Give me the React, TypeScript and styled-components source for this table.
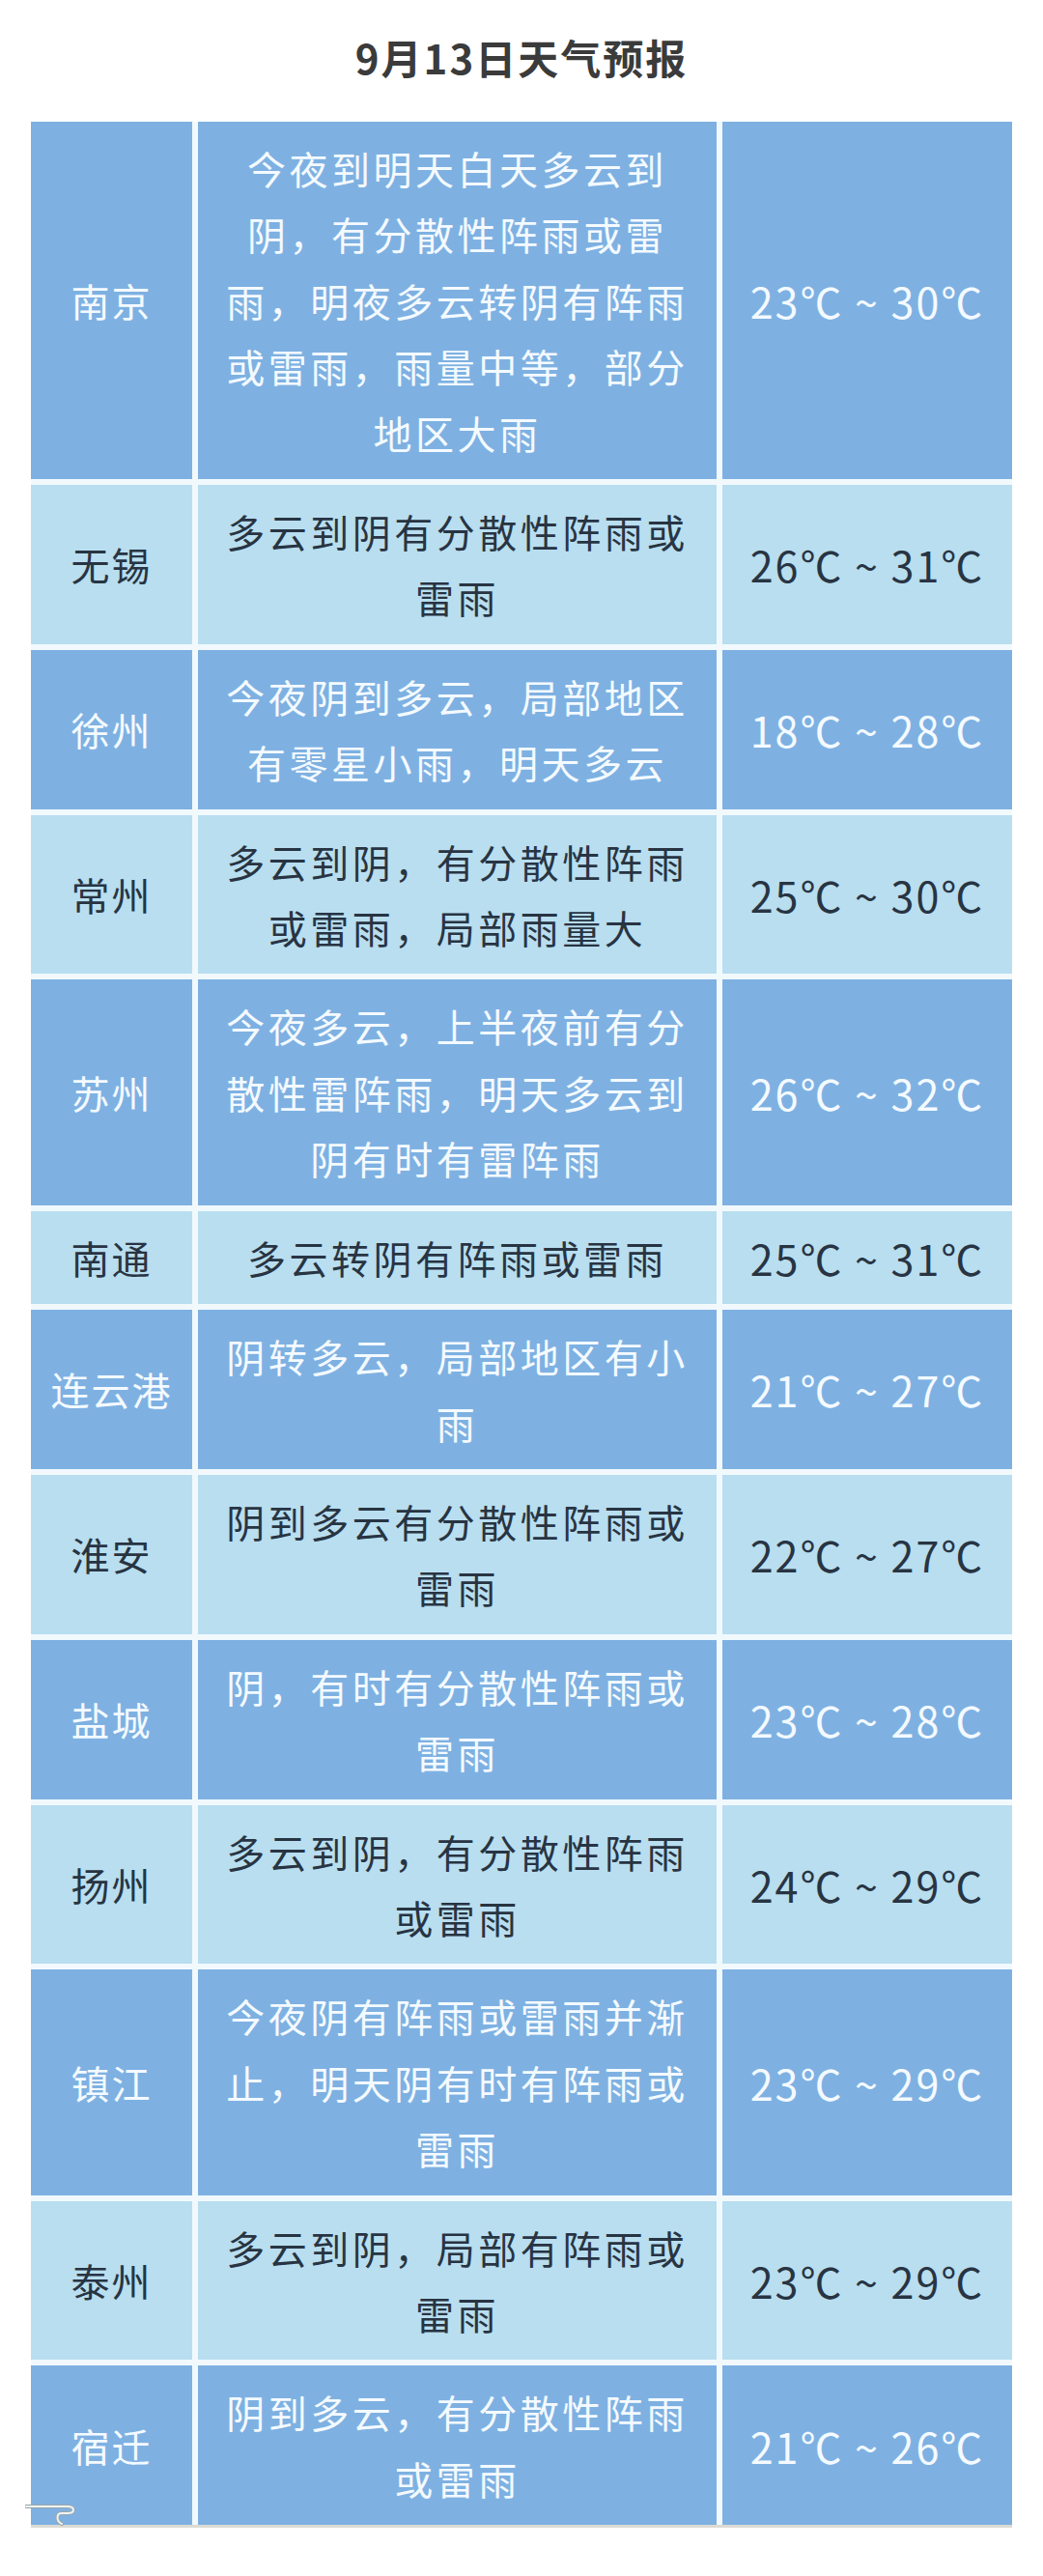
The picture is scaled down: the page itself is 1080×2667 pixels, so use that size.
import React, { FC } from "react";
import styled, { createGlobalStyle } from "styled-components";

type Tone = "dark" | "light";

interface RowData {
  city: string;
  tone: Tone;
  lines: string[];
  temp: string;
}

const rows: RowData[] = [
  {
    city: "南京",
    tone: "dark",
    lines: [
      "今夜到明天白天多云到",
      "阴，有分散性阵雨或雷",
      "雨，明夜多云转阴有阵雨",
      "或雷雨，雨量中等，部分",
      "地区大雨",
    ],
    temp: "23℃ ~ 30℃",
  },
  { city: "无锡", tone: "light", lines: ["多云到阴有分散性阵雨或", "雷雨"], temp: "26℃ ~ 31℃" },
  {
    city: "徐州",
    tone: "dark",
    lines: ["今夜阴到多云，局部地区", "有零星小雨，明天多云"],
    temp: "18℃ ~ 28℃",
  },
  {
    city: "常州",
    tone: "light",
    lines: ["多云到阴，有分散性阵雨", "或雷雨，局部雨量大"],
    temp: "25℃ ~ 30℃",
  },
  {
    city: "苏州",
    tone: "dark",
    lines: ["今夜多云，上半夜前有分", "散性雷阵雨，明天多云到", "阴有时有雷阵雨"],
    temp: "26℃ ~ 32℃",
  },
  { city: "南通", tone: "light", lines: ["多云转阴有阵雨或雷雨"], temp: "25℃ ~ 31℃" },
  { city: "连云港", tone: "dark", lines: ["阴转多云，局部地区有小", "雨"], temp: "21℃ ~ 27℃" },
  { city: "淮安", tone: "light", lines: ["阴到多云有分散性阵雨或", "雷雨"], temp: "22℃ ~ 27℃" },
  { city: "盐城", tone: "dark", lines: ["阴，有时有分散性阵雨或", "雷雨"], temp: "23℃ ~ 28℃" },
  { city: "扬州", tone: "light", lines: ["多云到阴，有分散性阵雨", "或雷雨"], temp: "24℃ ~ 29℃" },
  {
    city: "镇江",
    tone: "dark",
    lines: ["今夜阴有阵雨或雷雨并渐", "止，明天阴有时有阵雨或", "雷雨"],
    temp: "23℃ ~ 29℃",
  },
  { city: "泰州", tone: "light", lines: ["多云到阴，局部有阵雨或", "雷雨"], temp: "23℃ ~ 29℃" },
  { city: "宿迁", tone: "dark", lines: ["阴到多云，有分散性阵雨", "或雷雨"], temp: "21℃ ~ 26℃" },
];

const GlobalStyle = createGlobalStyle`
  body {
    margin: 0;
    background: #ffffff;
    font-family: "Noto Sans CJK SC", "Noto Sans", sans-serif;
  }
`;

const App: FC = () => {
  return (
    <StyledPage>
      <GlobalStyle />
      <StyledTitle>9月13日天气预报</StyledTitle>
      <StyledTableWrap>
        <StyledTable>
          {rows.map((row) => (
            <React.Fragment key={row.city}>
              <StyledCityCell $tone={row.tone}>{row.city}</StyledCityCell>
              <StyledCell $tone={row.tone}>
                {row.lines.map((line, i) => (
                  <StyledLine key={i}>{line}</StyledLine>
                ))}
              </StyledCell>
              <StyledTempCell $tone={row.tone}>{row.temp}</StyledTempCell>
            </React.Fragment>
          ))}
        </StyledTable>
        <StyledCurl viewBox="0 0 56 24" aria-hidden="true">
          <path
            d="M1 3 H44 C52 3 52 10 44 10 H38 C32 10 32 18 38 21"
            fill="none"
            stroke="#9aa6ac"
            strokeWidth="4"
            strokeLinecap="round"
          />
          <path
            d="M1 3 H44 C52 3 52 10 44 10 H38 C32 10 32 18 38 21"
            fill="none"
            stroke="#eef3f2"
            strokeWidth="2"
            strokeLinecap="round"
          />
        </StyledCurl>
      </StyledTableWrap>
    </StyledPage>
  );
};

const StyledPage = styled.div`
  width: 1080px;
  min-height: 2667px;
  background: #ffffff;
`;

const StyledTitle = styled.h1`
  margin: 0;
  padding: 38px 0 46px;
  text-align: center;
  font-size: 42px;
  line-height: 42px;
  font-weight: 700;
  letter-spacing: 2px;
  color: #3b3b3b;
`;

const StyledTableWrap = styled.div`
  position: relative;
  margin: 0 32px;
`;

const StyledTable = styled.div`
  display: grid;
  grid-template-columns: 167px 537px 300px;
  gap: 6px;
  background: #f1f9fd;
  border-bottom: 3px solid #dcdbd3;
`;

const StyledCell = styled.div<{ $tone: Tone }>`
  display: flex;
  flex-direction: column;
  align-items: center;
  justify-content: center;
  padding: 14px 0;
  font-size: 40px;
  line-height: 68.4px;
  letter-spacing: 3.5px;
  text-align: center;
  background: ${(p) => (p.$tone === "dark" ? "#7eb1e2" : "#b8def0")};
  color: ${(p) => (p.$tone === "dark" ? "#f4faff" : "#283442")};
`;

const StyledCityCell = styled(StyledCell)`
  letter-spacing: 2px;
`;

const StyledLine = styled.span`
  display: block;
  white-space: nowrap;
`;

const StyledTempCell = styled(StyledCell)`
  font-size: 43px;
  letter-spacing: 2px;
`;

const StyledCurl = styled.svg`
  position: absolute;
  left: -6px;
  bottom: 1px;
  width: 56px;
  height: 24px;
`;

export default App;
